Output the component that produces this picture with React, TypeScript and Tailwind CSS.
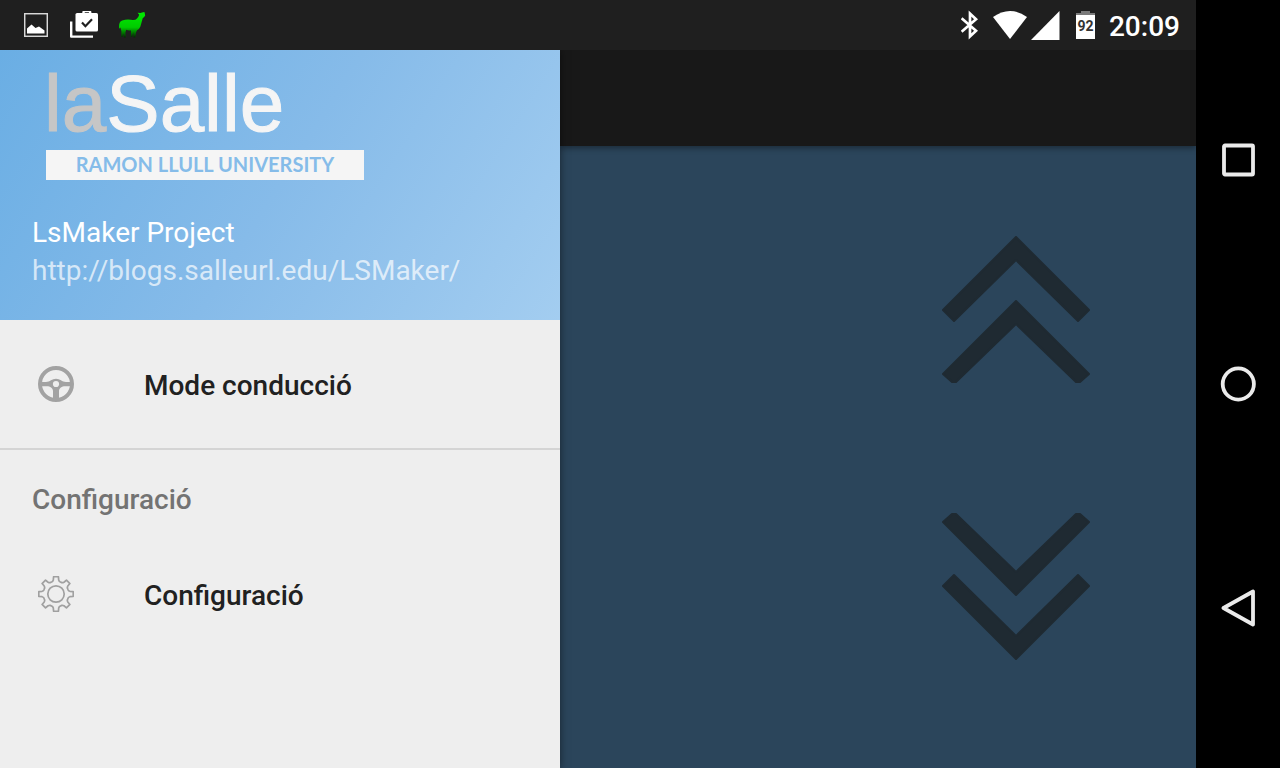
import React from 'react';

// Gear outline: eight teeth around (18, 18)
const polar = (r: number, deg: number) => {
  const a = ((deg - 90) * Math.PI) / 180;
  return `${(18 + r * Math.cos(a)).toFixed(2)} ${(18 + r * Math.sin(a)).toFixed(2)}`;
};

const gearPath =
  Array.from({ length: 8 }, (_, i) => {
    const d = i * 45;
    return `${i === 0 ? 'M' : 'L'}${polar(17.4, d - 8)} L${polar(17.4, d + 8)} L${polar(14.2, d + 11)} Q${polar(13, d + 14)} ${polar(12.8, d + 18)} L${polar(12.8, d + 27)} Q${polar(13, d + 31)} ${polar(14.2, d + 34)}`;
  }).join(' ') + ' Z';

const GearIcon = () => (
  <svg viewBox="0 0 36 36" className="w-9 h-9" fill="none" stroke="#a0a0a0" strokeWidth="1.7" strokeLinejoin="round">
    <path d={gearPath} />
    <circle cx="18" cy="18" r="8.2" />
  </svg>
);

const WheelIcon = () => (
  <svg viewBox="0 0 36 36" className="w-9 h-9">
    <circle cx="18" cy="18" r="16" fill="none" stroke="#a2a2a2" strokeWidth="4" />
    <path
      d="M3 16 H8 C12 16 14 12.8 18 12.8 S24 16 28 16 H33 V20.3 H27 C24 20.3 21 22 21 25 V33 H15 V25 C15 22 12 20.3 9 20.3 H3 Z"
      fill="#a2a2a2"
    />
    <circle cx="18" cy="18" r="3.1" fill="#eeeeee" />
  </svg>
);

const NotificationIcons = () => (
  <div className="flex items-center">
    <svg viewBox="0 0 24 24" className="w-6 h-6">
      <rect x="0.7" y="0.7" width="22.6" height="22.6" fill="none" stroke="#d8d8d8" strokeWidth="1.5" />
      <path d="M3 20.5 V15.5 L7.5 11.5 L11.5 15 L15 13.5 L20.5 17.5 V20.5 Z" fill="#fff" />
    </svg>
    <svg viewBox="0 0 28 28" className="w-7 h-7 ml-[22px]">
      <path d="M1.2 10.5 V25.6 H23" fill="none" stroke="#fff" strokeWidth="2.4" strokeLinejoin="round" />
      <path d="M13.5 3 V1.6 Q13.5 0 15 0 H18.6 Q20.2 0 20.2 1.6 V3" fill="none" stroke="#fff" strokeWidth="2.4" />
      <rect x="5.5" y="2" width="22.5" height="18.6" rx="1.6" fill="#fff" />
      <path d="M12 11.6 L15.4 15.2 L22 8.2" fill="none" stroke="#1f1f1f" strokeWidth="2.2" />
    </svg>
    <svg viewBox="0 0 27 26" className="w-[27px] h-[26px] ml-[21px]">
      <defs>
        <linearGradient id="llama" x1="0" y1="0" x2="0" y2="1">
          <stop offset="0" stopColor="#00ec00" />
          <stop offset="0.6" stopColor="#00cc00" />
          <stop offset="1" stopColor="#002c00" />
        </linearGradient>
      </defs>
      <path
        d="M18.6 0.8 L21.4 1 L23 0.4 L25.4 0 L25.8 1.6 L26.2 3.6 L25 5.2 L23.8 6 L22.8 9.6 L21.4 14.4 Q20.4 17 18 18.2 L17 20.4 L16.4 25.4 L14.6 25.4 L14.2 20 L13.4 24.8 L11.8 25 L12 18.4 Q9 18.8 7.2 17.8 L6.4 20.6 L6.8 25.4 L5 25.4 L4.4 21.4 L3.6 25 L2.2 24.8 L2.4 19.2 L1.4 15.6 L0.2 16.8 Q-0.8 10 3.2 8.4 Q8 7 12 7.8 Q16 8.8 18 6.6 Q19.6 4.8 20.2 2.8 Z"
        fill="url(#llama)"
      />
    </svg>
  </div>
);

const SystemIcons = () => (
  <div className="flex items-center">
    <svg viewBox="0 0 18 30" className="w-[18px] h-[30px]" fill="none" stroke="#fff" strokeWidth="2.7">
      <path d="M0.6 8.2 L15 20.8 L9 26.4 V3.6 L15 9.2 L0.6 21.8" />
    </svg>
    <svg viewBox="0 0 36 30" className="w-9 h-[30px] ml-[14px]">
      <path d="M0 7 Q17 -5 34 7 L17 29 Z" fill="#fff" />
    </svg>
    <svg viewBox="0 0 29 29" className="w-[29px] h-[29px] ml-[2px]">
      <path d="M28.5 0 V29 H0 Z" fill="#fff" />
    </svg>
    <div className="ml-4 flex flex-col items-center w-[19px]">
      <div className="w-[9px] h-0.5 bg-[#7a7a7a]" />
      <div className="w-full h-0.5 bg-[#7a7a7a]" />
      <div className="w-full h-6 bg-white text-[#333333] text-[14px] leading-[22px] font-bold text-center">92</div>
    </div>
    <span className="ml-[14px] pt-1 text-[28px] leading-[46px] font-medium text-white">20:09</span>
  </div>
);

const DrawerItem = ({ label, icon }: { label: string; icon: React.ReactNode }) => (
  <button className="flex items-center w-full h-24 px-8 text-left text-[28px] font-medium text-[#212121]">
    <span className="flex justify-center w-12 mr-16">{icon}</span>
    <span className="pt-1">{label}</span>
  </button>
);

const Drawer = () => (
  <aside className="relative z-10 flex flex-col w-[560px] shrink-0 bg-[#eeeeee] shadow-[0_0_8px_rgba(0,0,0,0.5)]">
    <header className="flex flex-col h-[270px] pb-[30px] bg-[linear-gradient(122deg,#6aaee4,#86bbe9_50%,#a3cdf0)]">
      <div className="ml-[46px] w-[318px] font-['Liberation_Sans',sans-serif]">
        <div className="h-[100px] -ml-0.5 text-[80px] leading-[107px] text-[#f5f5f5] [-webkit-text-stroke:1px_currentColor]">
          <span className="text-[#c6c6c6]">la</span>Salle
        </div>
        <div className="h-[30px] bg-[#f5f5f5] text-center text-[#85bce9] text-[20px] leading-7 font-bold font-['Lato',sans-serif]">
          RAMON LLULL UNIVERSITY
        </div>
      </div>
      <div className="mt-auto px-8 flex flex-col text-[28px] leading-[38px]">
        <span className="text-white">LsMaker Project</span>
        <a href="http://blogs.salleurl.edu/LSMaker/" className="text-white/70">
          http://blogs.salleurl.edu/LSMaker/
        </a>
      </div>
    </header>

    <nav>
      <div className="py-4 border-b-2 border-[#d4d4d4] box-content">
        <DrawerItem label="Mode conducció" icon={<WheelIcon />} />
      </div>
      <h2 className="flex items-center h-24 px-8 pt-1 text-[28px] font-medium text-[#737373]">Configuració</h2>
      <DrawerItem label="Configuració" icon={<GearIcon />} />
    </nav>
  </aside>
);

const Controls = () => (
  <main className="flex-1 flex flex-col">
    <div className="h-24 bg-[#181818] shadow-[0_2px_6px_rgba(0,0,0,0.4)]" />
    <div className="flex-1 flex flex-col items-end justify-center gap-32 pb-[18px] pr-[106px]">
      <button aria-label="Endavant">
        <svg viewBox="0 0 148 148" className="block w-[148px] h-[148px]" fill="#1f2a32" stroke="#1f2a32" strokeWidth="2" strokeLinejoin="round">
          <path d="M74 1 L147 74 L136 85 L74 24 L12 85 L1 74 Z" />
          <path d="M74 65 L147 138 L138 146 H134 L74 88 L14 146 H10 L1 138 Z" />
        </svg>
      </button>
      <button aria-label="Enrere">
        <svg viewBox="0 0 148 148" className="block w-[148px] h-[148px]" fill="#1f2a32" stroke="#1f2a32" strokeWidth="2" strokeLinejoin="round">
          <path d="M74 83 L147 10 L138 2 H134 L74 60 L14 2 H10 L1 10 Z" />
          <path d="M74 147 L147 74 L136 63 L74 124 L12 63 L1 74 Z" />
        </svg>
      </button>
    </div>
  </main>
);

const navButtons = [
  { label: 'Recents', shape: <rect x="5" y="4.5" width="29" height="29" rx="1" /> },
  { label: 'Inici', shape: <circle cx="19.3" cy="19" r="15.6" /> },
  { label: 'Enrere', shape: <path d="M4.5 19 L34 2.5 V35.5 Z" /> },
];

const NavigationBar = () => (
  <nav className="flex flex-col w-[84px] py-12 bg-black">
    {navButtons.map((button) => (
      <button key={button.label} aria-label={button.label} className="flex-1 flex items-center justify-center">
        <svg viewBox="0 0 38 38" className="w-[38px] h-[38px]" fill="none" stroke="#ebebeb" strokeWidth="3.8" strokeLinejoin="round">
          {button.shape}
        </svg>
      </button>
    ))}
  </nav>
);

const App: React.FC = () => {
  return (
    <div className="flex min-h-screen font-['Roboto',sans-serif]">
      <div className="flex-1 flex flex-col bg-[#2b455b]">
        <div className="relative z-20 flex items-center justify-between h-[50px] pl-6 pr-4 bg-[#1f1f1f]">
          <NotificationIcons />
          <SystemIcons />
        </div>
        <div className="flex-1 flex">
          <Drawer />
          <Controls />
        </div>
      </div>
      <NavigationBar />
    </div>
  );
};

export default App;
